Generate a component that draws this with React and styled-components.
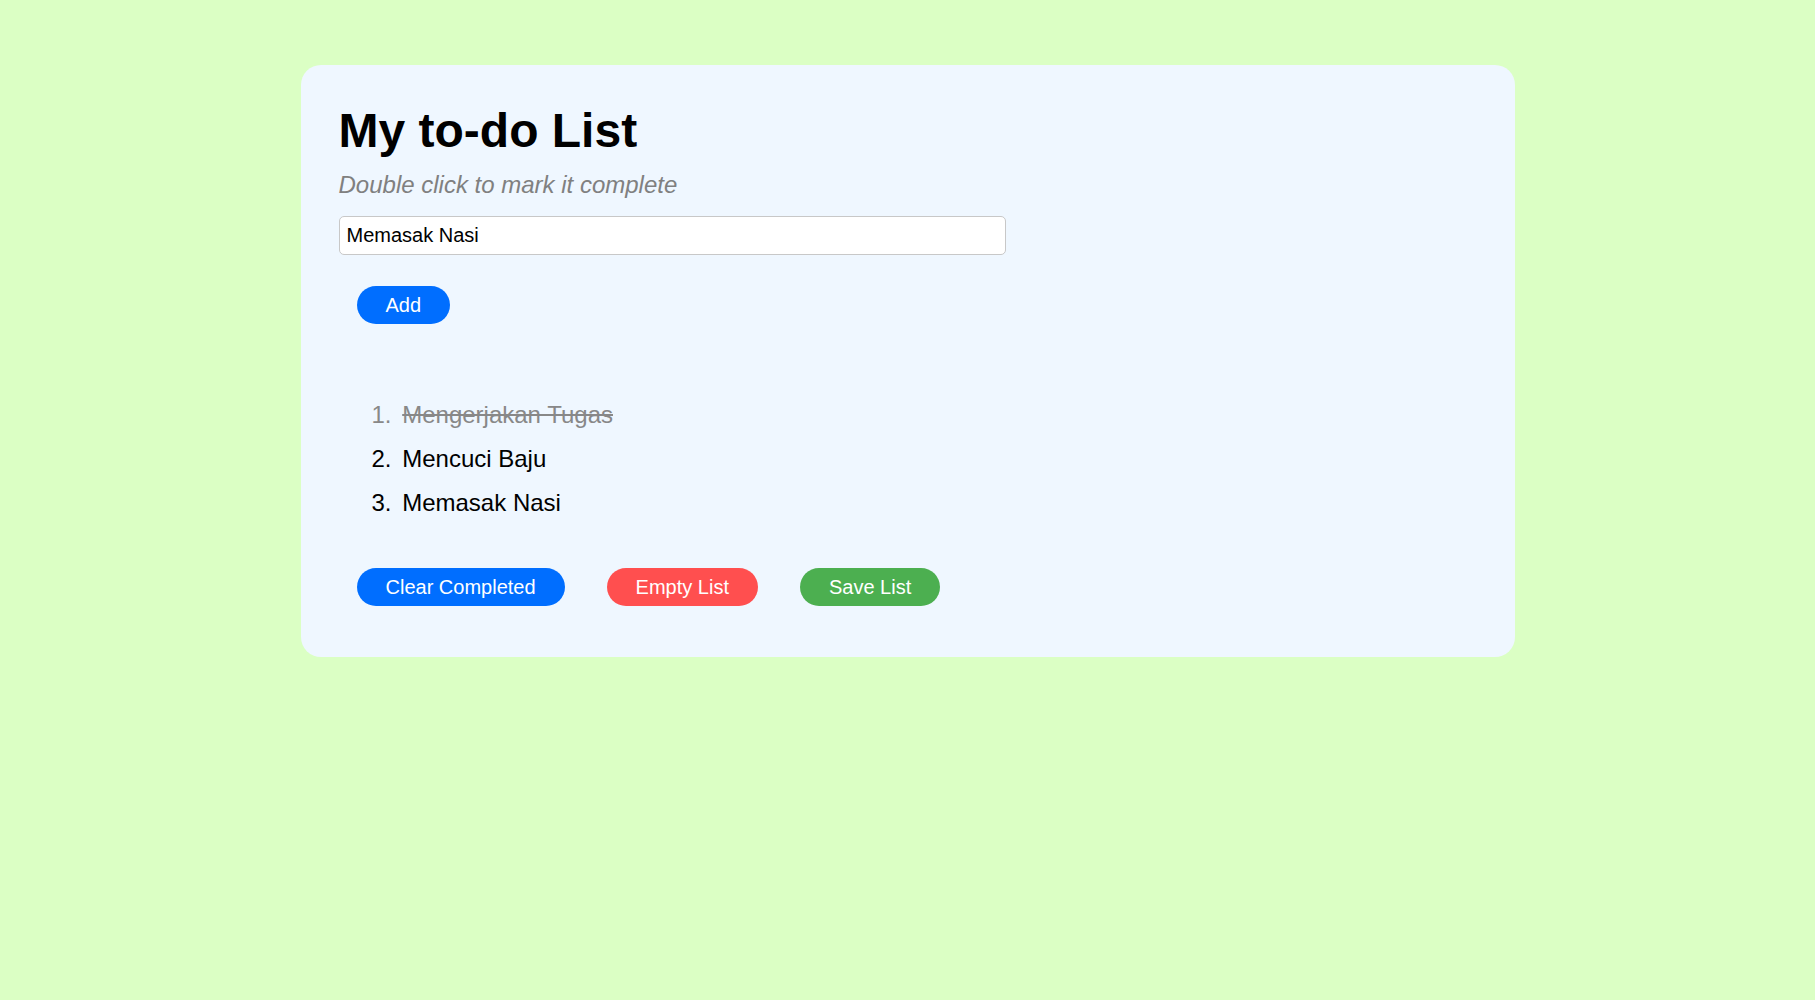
import React, { useState } from "react";
import styled, { createGlobalStyle } from "styled-components";

const GlobalStyle = createGlobalStyle`
  html, body {
    margin: 0;
    padding: 0;
    background: #dbffc4;
    min-height: 100vh;
    font-family: "Liberation Sans", Arial, sans-serif;
  }
`;

const initialTodos = [
  { text: "Mengerjakan Tugas", done: true },
  { text: "Mencuci Baju", done: false },
  { text: "Memasak Nasi", done: false },
];

const App = () => {
  const [todos, setTodos] = useState(initialTodos);
  const [draft, setDraft] = useState("Memasak Nasi");

  const toggle = index =>
    setTodos(todos.map((t, i) => (i === index ? { ...t, done: !t.done } : t)));

  const add = () => {
    if (!draft.trim()) return;
    setTodos([...todos, { text: draft, done: false }]);
  };

  return (
    <>
      <GlobalStyle />
      <Card>
        <Title>My to-do List</Title>
        <Hint>Double click to mark it complete</Hint>
        <TextInput value={draft} onChange={e => setDraft(e.target.value)} />
        <ButtonRow $top={31}>
          <PillButton $color="#006eff" onClick={add}>Add</PillButton>
        </ButtonRow>
        <TodoList>
          {todos.map((todo, i) => (
            <TodoItem key={i} $done={todo.done} onDoubleClick={() => toggle(i)}>
              <ItemText $done={todo.done}>{todo.text}</ItemText>
            </TodoItem>
          ))}
        </TodoList>
        <ButtonRow $top={42.4}>
          <PillButton
            $color="#006eff"
            onClick={() => setTodos(todos.filter(t => !t.done))}
          >
            Clear Completed
          </PillButton>
          <PillButton $color="#ff4f4f" onClick={() => setTodos([])}>
            Empty List
          </PillButton>
          <PillButton $color="#4caf50">Save List</PillButton>
        </ButtonRow>
      </Card>
    </>
  );
};

export default App;

const Card = styled.div`
  box-sizing: border-box;
  width: 1214px;
  margin: 65px auto 0;
  padding: 38px 38px 51px;
  background: #eff7ff;
  border-radius: 20px;
`;

const Title = styled.h1`
  margin: 0;
  font-size: 48px;
  font-weight: bold;
  line-height: 55px;
  color: #000;
`;

const Hint = styled.p`
  margin: 13px 0 17px;
  font-size: 24px;
  font-style: italic;
  line-height: 28px;
  color: #808080;
`;

const TextInput = styled.input`
  display: block;
  box-sizing: border-box;
  width: 667px;
  height: 39px;
  padding: 7px;
  font-family: "Liberation Sans", Arial, sans-serif;
  font-size: 20px;
  color: #000;
  background: #fff;
  border: 1px solid #c8c8c8;
  border-radius: 5px;
  outline: none;
`;

const ButtonRow = styled.div`
  display: flex;
  gap: 42px;
  margin-top: ${props => props.$top}px;
  padding-left: 18px;
`;

const PillButton = styled.button`
  height: 38px;
  padding: 0 29px;
  border: none;
  border-radius: 19px;
  background: ${props => props.$color};
  color: #fff;
  font-family: "Liberation Sans", Arial, sans-serif;
  font-size: 20px;
  cursor: pointer;
`;

const TodoList = styled.ol`
  margin: 69px 0 0;
  padding-left: 25px;
  list-style: none;
  counter-reset: todo;
`;

const TodoItem = styled.li`
  counter-increment: todo;
  padding: 8px 0;
  font-size: 24px;
  line-height: 28.2px;
  color: ${props => (props.$done ? "#888" : "#000")};
  cursor: pointer;
  user-select: none;

  &::before {
    content: counter(todo) ".";
    display: inline-block;
    width: 28px;
    margin-right: 10.7px;
    text-align: right;
  }
`;

const ItemText = styled.span`
  text-decoration: ${props => (props.$done ? "line-through" : "none")};
`;
